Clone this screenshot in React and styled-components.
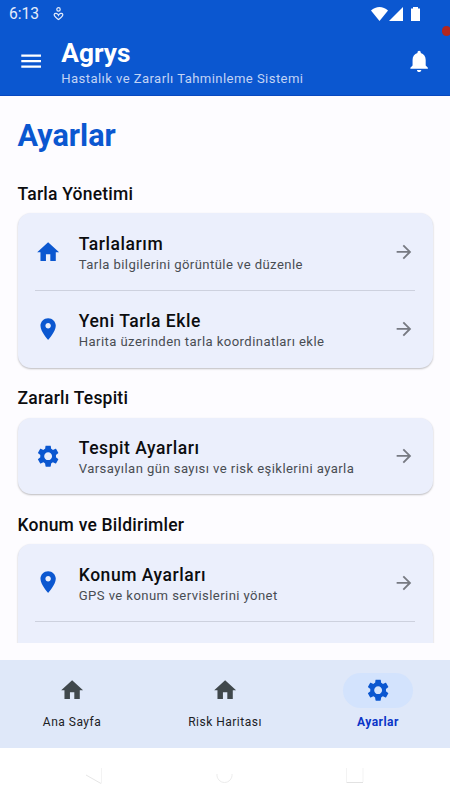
import React from 'react';
import styled, { createGlobalStyle } from 'styled-components';

const GlobalStyle = createGlobalStyle`
  body {
    margin: 0;
    background-color: #ffffff;
    font-family: Roboto, sans-serif;
  }

  * {
    box-sizing: border-box;
  }
`

const Screen = styled.div`
  display: flex;
  flex-direction: column;
  width: 450px;
  height: 800px;
  overflow: hidden;
  background-color: #fdfcff;
`

const Header = styled.header`
  position: relative;
  flex: none;
  height: 96px;
  background-color: #0b57d0;
  border-bottom: 1px solid #0848c0;
  color: #ffffff;
`

const StatusBar = styled.div`
  display: flex;
  align-items: center;
  height: 27px;
  padding: 0 30px 0 9px;
`

const Clock = styled.span`
  width: 44px;
  font-size: 15.6px;
  line-height: 28px;
  color: #e6edfb;
`

const StatusIcons = styled.div`
  display: flex;
  margin-left: auto;
`

const AppBar = styled.div`
  display: flex;
  align-items: center;
  height: 69px;
  padding: 0 18px;
`

const Titles = styled.div`
  flex: 1;
  margin-left: 17px;
  padding-top: 4px;
`

const AppName = styled.div`
  font-size: 26.25px;
  font-weight: 700;
  line-height: 31px;
`

const Tagline = styled.div`
  font-size: 13.1px;
  line-height: 20px;
  letter-spacing: 0.42px;
  color: #c2d3f5;
  white-space: nowrap;
`

const Badge = styled.span`
  position: absolute;
  top: 26px;
  right: -1px;
  width: 9.5px;
  height: 9.5px;
  border-radius: 50%;
  background-color: #b3261e;
`

const Content = styled.main`
  flex: none;
  height: 546.5px;
  padding: 0 17.5px;
  overflow: hidden;
`

const PageTitle = styled.h1`
  margin: 0;
  padding-top: 20px;
  font-size: 30.6px;
  font-weight: 700;
  line-height: 40px;
  color: #0b57d0;
`

const SectionTitle = styled.h2`
  display: flex;
  align-items: center;
  height: 50px;
  margin: 0;
  padding-top: 11px;
  font-size: 17.5px;
  font-weight: 500;
  letter-spacing: 0.22px;
  color: #0c0d0f;
`

const Card = styled.div`
  padding: 0 17.5px;
  border-radius: 13px;
  background-color: #ebeffc;
  box-shadow: 0 1px 2px rgba(0, 0, 0, 0.26);
`

const FirstSection = styled.section`
  padding-top: 7.4px;
`

const Row = styled.div`
  display: flex;
  align-items: center;
  height: 76.6px;

  & + & {
    height: 77.7px;
    border-top: 1px solid #cdd1de;
  }
`

const RowText = styled.div`
  flex: 1;
  margin-left: 17.5px;
  padding-top: 3px;
  white-space: nowrap;
`

const RowTitle = styled.div`
  font-size: 17.5px;
  font-weight: 500;
  line-height: 22px;
  letter-spacing: 0.55px;
  color: #0c0d0f;
`

const RowInfo = styled.div`
  font-size: 13.1px;
  line-height: 19px;
  letter-spacing: 0.42px;
  color: #484c52;
`

const BottomNav = styled.nav`
  display: flex;
  flex: none;
  gap: 8.75px;
  height: 87.5px;
  margin-top: 17.5px;
  padding-top: 13px;
  background-color: #dfe8f9;
`

const NavItem = styled.div`
  display: flex;
  flex: 1;
  flex-direction: column;
  align-items: center;
  color: ${props => props.$active ? '#0b57d0' : '#40484c'};
`

const NavPill = styled.div`
  display: flex;
  align-items: center;
  justify-content: center;
  width: 70px;
  height: 35px;
  border-radius: 18px;
  background-color: ${props => props.$active ? '#d3e3fd' : 'transparent'};
`

const NavLabel = styled.span`
  margin-top: 5px;
  font-size: 12px;
  font-weight: ${props => props.$active ? 700 : 400};
  line-height: 18px;
  letter-spacing: 0.5px;
  color: ${props => props.$active ? '#0a35c8' : '#1b2024'};
`

const SystemBar = styled.div`
  display: flex;
  flex: 1;
  justify-content: space-between;
  padding: 15px 83px 0 81px;
  background-color: #ffffff;
`

const paths = {
  menu: 'M3,18h18v-2H3v2zM3,13h18v-2H3v2zM3,6v2h18V6H3z',
  bell: 'M12,22c1.1,0 2,-0.9 2,-2h-4c0,1.1 0.89,2 2,2zM18,16v-5c0,-3.07 -1.64,-5.64 -4.5,-6.32V4c0,-0.83 -0.67,-1.5 -1.5,-1.5s-1.5,0.67 -1.5,1.5v0.68C7.63,5.36 6,7.92 6,11v5l-2,2v1h16v-1l-2,-2z',
  home: 'M10,20v-6h4v6h5v-8h3L12,3 2,12h3v8z',
  place: 'M12,2C8.13,2 5,5.13 5,9c0,5.25 7,13 7,13s7,-7.75 7,-13c0,-3.87 -3.13,-7 -7,-7zM12,11.5c-1.38,0 -2.5,-1.12 -2.5,-2.5s1.12,-2.5 2.5,-2.5 2.5,1.12 2.5,2.5 -1.12,2.5 -2.5,2.5z',
  settings: 'M19.14,12.94c0.04,-0.3 0.06,-0.61 0.06,-0.94c0,-0.32 -0.02,-0.64 -0.07,-0.94l2.03,-1.58c0.18,-0.14 0.23,-0.41 0.12,-0.61l-1.92,-3.32c-0.12,-0.22 -0.37,-0.29 -0.59,-0.22l-2.39,0.96c-0.5,-0.38 -1.03,-0.7 -1.62,-0.94L14.4,2.81c-0.04,-0.24 -0.24,-0.41 -0.48,-0.41h-3.84c-0.24,0 -0.43,0.17 -0.47,0.41L9.25,5.35C8.66,5.59 8.12,5.92 7.63,6.29L5.24,5.33c-0.22,-0.08 -0.47,0 -0.59,0.22L2.74,8.87C2.62,9.08 2.66,9.34 2.86,9.48l2.03,1.58C4.84,11.36 4.8,11.69 4.8,12s0.02,0.64 0.07,0.94l-2.03,1.58c-0.18,0.14 -0.23,0.41 -0.12,0.61l1.92,3.32c0.12,0.22 0.37,0.29 0.59,0.22l2.39,-0.96c0.5,0.38 1.03,0.7 1.62,0.94l0.36,2.54c0.05,0.24 0.24,0.41 0.48,0.41h3.84c0.24,0 0.44,-0.17 0.47,-0.41l0.36,-2.54c0.59,-0.24 1.13,-0.56 1.62,-0.94l2.39,0.96c0.22,0.08 0.47,0 0.59,-0.22l1.92,-3.32c0.12,-0.22 0.07,-0.47 -0.12,-0.61L19.14,12.94zM12,15.6c-1.98,0 -3.6,-1.62 -3.6,-3.6s1.62,-3.6 3.6,-3.6s3.6,1.62 3.6,3.6S13.98,15.6 12,15.6z',
  arrow: 'M12,4l-1.41,1.41L16.17,11H4v2h12.17l-5.58,5.59L12,20l8,-8z',
}

const Icon = ({ name, size = 26.25, color = 'currentColor' }) => (
  <svg width={size} height={size} viewBox="0 0 24 24" fill={color}>
    <path d={paths[name]} />
  </svg>
)

const CareIcon = () => (
  <svg width="11" height="14" viewBox="0 0 11 14" fill="none" stroke="#e6edfb" strokeWidth="1.2">
    <circle cx="5.5" cy="2.4" r="1.7" />
    <path d="M5.5 8.2 C4.6 6.2 1.8 5.8 1.2 7.4 C0.8 9.2 3.6 11.2 5.5 12.6 C7.4 11.2 10.2 9.2 9.8 7.4 C9.2 5.8 6.4 6.2 5.5 8.2 Z" />
  </svg>
)

const PhoneStatus = () => (
  <svg width="49" height="14" viewBox="0 0 49 14" fill="#ffffff">
    <path d="M0 3.6 C4.8 -1.2 12.2 -1.2 17 3.6 L8.5 14 Z" />
    <path d="M32 0 V14 H18 Z" />
    <path d="M40 1.4 H42 V0 H47 V1.4 H49 V14 H40 Z" />
  </svg>
)

const MenuRow = ({ icon, title, info }) => (
  <Row>
    <Icon name={icon} color="#0b57d0" />
    <RowText>
      <RowTitle>{title}</RowTitle>
      <RowInfo>{info}</RowInfo>
    </RowText>
    <Icon name="arrow" size={21.9} color="#777a82" />
  </Row>
)

const NavButton = ({ icon, label, active }) => (
  <NavItem $active={active}>
    <NavPill $active={active}>
      <Icon name={icon} />
    </NavPill>
    <NavLabel $active={active}>{label}</NavLabel>
  </NavItem>
)

export class App extends React.Component {
  render() {
    return (
      <Screen>
        <GlobalStyle />
        <Header>
          <StatusBar>
            <Clock>6:13</Clock>
            <CareIcon />
            <StatusIcons>
              <PhoneStatus />
            </StatusIcons>
          </StatusBar>
          <AppBar>
            <Icon name="menu" />
            <Titles>
              <AppName>Agrys</AppName>
              <Tagline>Hastalık ve Zararlı Tahminleme Sistemi</Tagline>
            </Titles>
            <Icon name="bell" />
          </AppBar>
          <Badge />
        </Header>

        <Content>
          <PageTitle>Ayarlar</PageTitle>
          <FirstSection>
            <SectionTitle>Tarla Yönetimi</SectionTitle>
            <Card>
              <MenuRow icon="home" title="Tarlalarım" info="Tarla bilgilerini görüntüle ve düzenle" />
              <MenuRow icon="place" title="Yeni Tarla Ekle" info="Harita üzerinden tarla koordinatları ekle" />
            </Card>
          </FirstSection>
          <section>
            <SectionTitle>Zararlı Tespiti</SectionTitle>
            <Card>
              <MenuRow icon="settings" title="Tespit Ayarları" info="Varsayılan gün sayısı ve risk eşiklerini ayarla" />
            </Card>
          </section>
          <section>
            <SectionTitle>Konum ve Bildirimler</SectionTitle>
            <Card>
              <MenuRow icon="place" title="Konum Ayarları" info="GPS ve konum servislerini yönet" />
              <Row />
            </Card>
          </section>
        </Content>

        <BottomNav>
          <NavButton icon="home" label="Ana Sayfa" />
          <NavButton icon="home" label="Risk Haritası" />
          <NavButton icon="settings" label="Ayarlar" active />
        </BottomNav>

        <SystemBar>
          <svg width="24" height="24" viewBox="0 0 24 24" fill="none" stroke="#e6e6e6">
            <path d="M5 12 L20 20.5" />
            <path d="M20.5 5 V20.5" stroke="#f3f3f3" />
          </svg>
          <svg width="24" height="24" viewBox="0 0 24 24" fill="none" stroke="#ececec">
            <path d="M5 11 C4.5 15.5 8 19.5 12.5 19.5 C17 19.5 20.5 15.5 20 11" />
          </svg>
          <svg width="24" height="24" viewBox="0 0 24 24" fill="none" stroke="#e2e2e2">
            <path d="M3.5 5 V19 M20 5 V19" stroke="#f3f3f3" />
            <path d="M3.5 19.5 H20" />
          </svg>
        </SystemBar>
      </Screen>
    )
  }
}

export default App;
